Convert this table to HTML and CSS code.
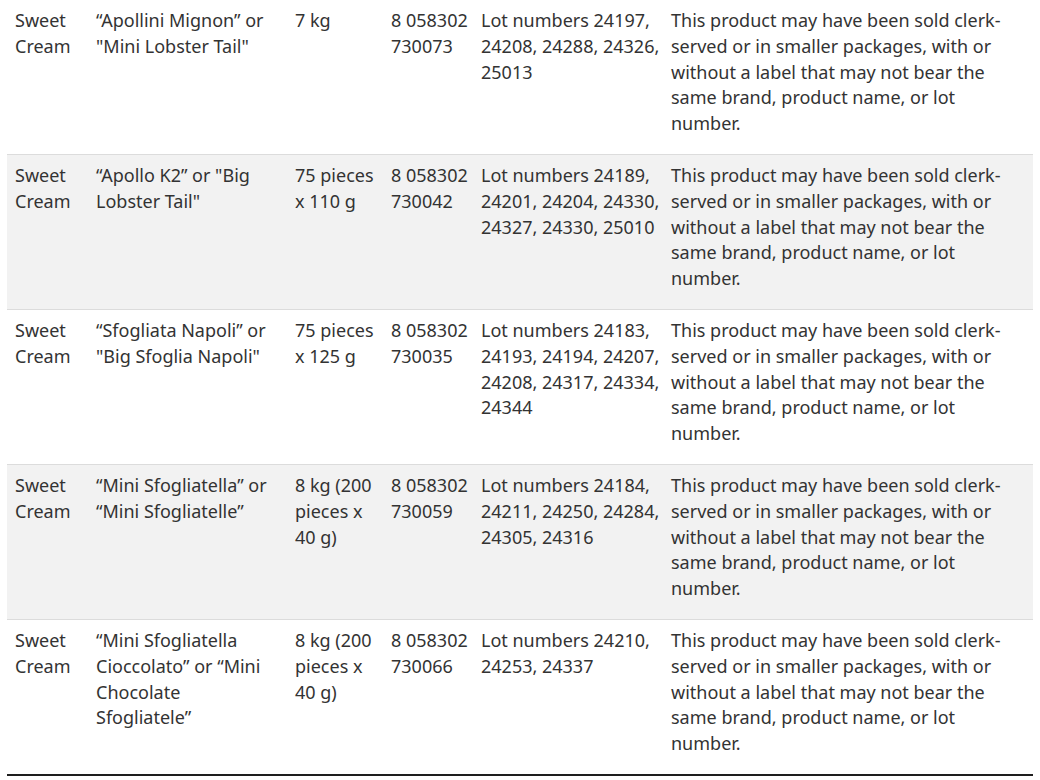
FILE: index.html
```html
<!DOCTYPE html>
<html lang="en">
<head>
<meta charset="utf-8">
<title>Recall products</title>
<link rel="stylesheet" href="styles.css">
</head>
<body>
<table class="recall">
  <colgroup>
    <col class="c-type">
    <col class="c-name">
    <col class="c-size">
    <col class="c-upc">
    <col class="c-codes">
    <col class="c-notes">
  </colgroup>
  <tbody>
    <tr>
      <td>Sweet Cream</td>
      <td>“Apollini Mignon” or "Mini Lobster Tail"</td>
      <td>7 kg</td>
      <td class="tight">8 058302 730073</td>
      <td class="tight">Lot numbers 24197, 24208, 24288, 24326, 25013</td>
      <td>This product may have been sold clerk-served or in smaller packages, with or without a label that may not bear the same brand, product name, or lot number.</td>
    </tr>
    <tr>
      <td>Sweet Cream</td>
      <td>“Apollo K2” or "Big Lobster Tail"</td>
      <td>75 pieces x 110 g</td>
      <td class="tight">8 058302 730042</td>
      <td class="tight">Lot numbers 24189, 24201, 24204, 24330, 24327, 24330, 25010</td>
      <td>This product may have been sold clerk-served or in smaller packages, with or without a label that may not bear the same brand, product name, or lot number.</td>
    </tr>
    <tr>
      <td>Sweet Cream</td>
      <td>“Sfogliata Napoli” or "Big Sfoglia Napoli"</td>
      <td>75 pieces x 125 g</td>
      <td class="tight">8 058302 730035</td>
      <td class="tight">Lot numbers 24183, 24193, 24194, 24207, 24208, 24317, 24334, 24344</td>
      <td>This product may have been sold clerk-served or in smaller packages, with or without a label that may not bear the same brand, product name, or lot number.</td>
    </tr>
    <tr>
      <td>Sweet Cream</td>
      <td>“Mini Sfogliatella” or “Mini Sfogliatelle”</td>
      <td>8 kg (200 pieces x 40 g)</td>
      <td class="tight">8 058302 730059</td>
      <td class="tight">Lot numbers 24184, 24211, 24250, 24284, 24305, 24316</td>
      <td>This product may have been sold clerk-served or in smaller packages, with or without a label that may not bear the same brand, product name, or lot number.</td>
    </tr>
    <tr>
      <td>Sweet Cream</td>
      <td>“Mini Sfogliatella Cioccolato” or “Mini Chocolate Sfogliatele”</td>
      <td>8 kg (200 pieces x 40 g)</td>
      <td class="tight">8 058302 730066</td>
      <td class="tight">Lot numbers 24210, 24253, 24337</td>
      <td>This product may have been sold clerk-served or in smaller packages, with or without a label that may not bear the same brand, product name, or lot number.</td>
    </tr>
  </tbody>
</table>
</body>
</html>
```

FILE: styles.css
```css
html, body {
  background: #ffffff;
}

body {
  margin: 0 7px;
  font-family: "Noto Sans", "Open Sans", sans-serif;
  font-size: 18px;
  line-height: 25.8px;
  color: #333333;
}

.recall {
  width: 1026px;
  border-collapse: collapse;
  table-layout: fixed;
}

.c-type { width: 81px; }
.c-name { width: 199px; }
.c-size { width: 96px; }
.c-upc { width: 90px; }
.c-codes { width: 190px; }
.c-notes { width: auto; }

.recall td {
  vertical-align: top;
  padding: 8px 8px 17px 8px;
  border-bottom: 1px solid #dcdcdc;
}

.recall td.tight {
  padding-right: 2px;
}

.recall tr:nth-child(even) td {
  background: #f2f2f2;
}

.recall tr:last-child td {
  border-bottom: 2px solid #1e1e1e;
}
```
